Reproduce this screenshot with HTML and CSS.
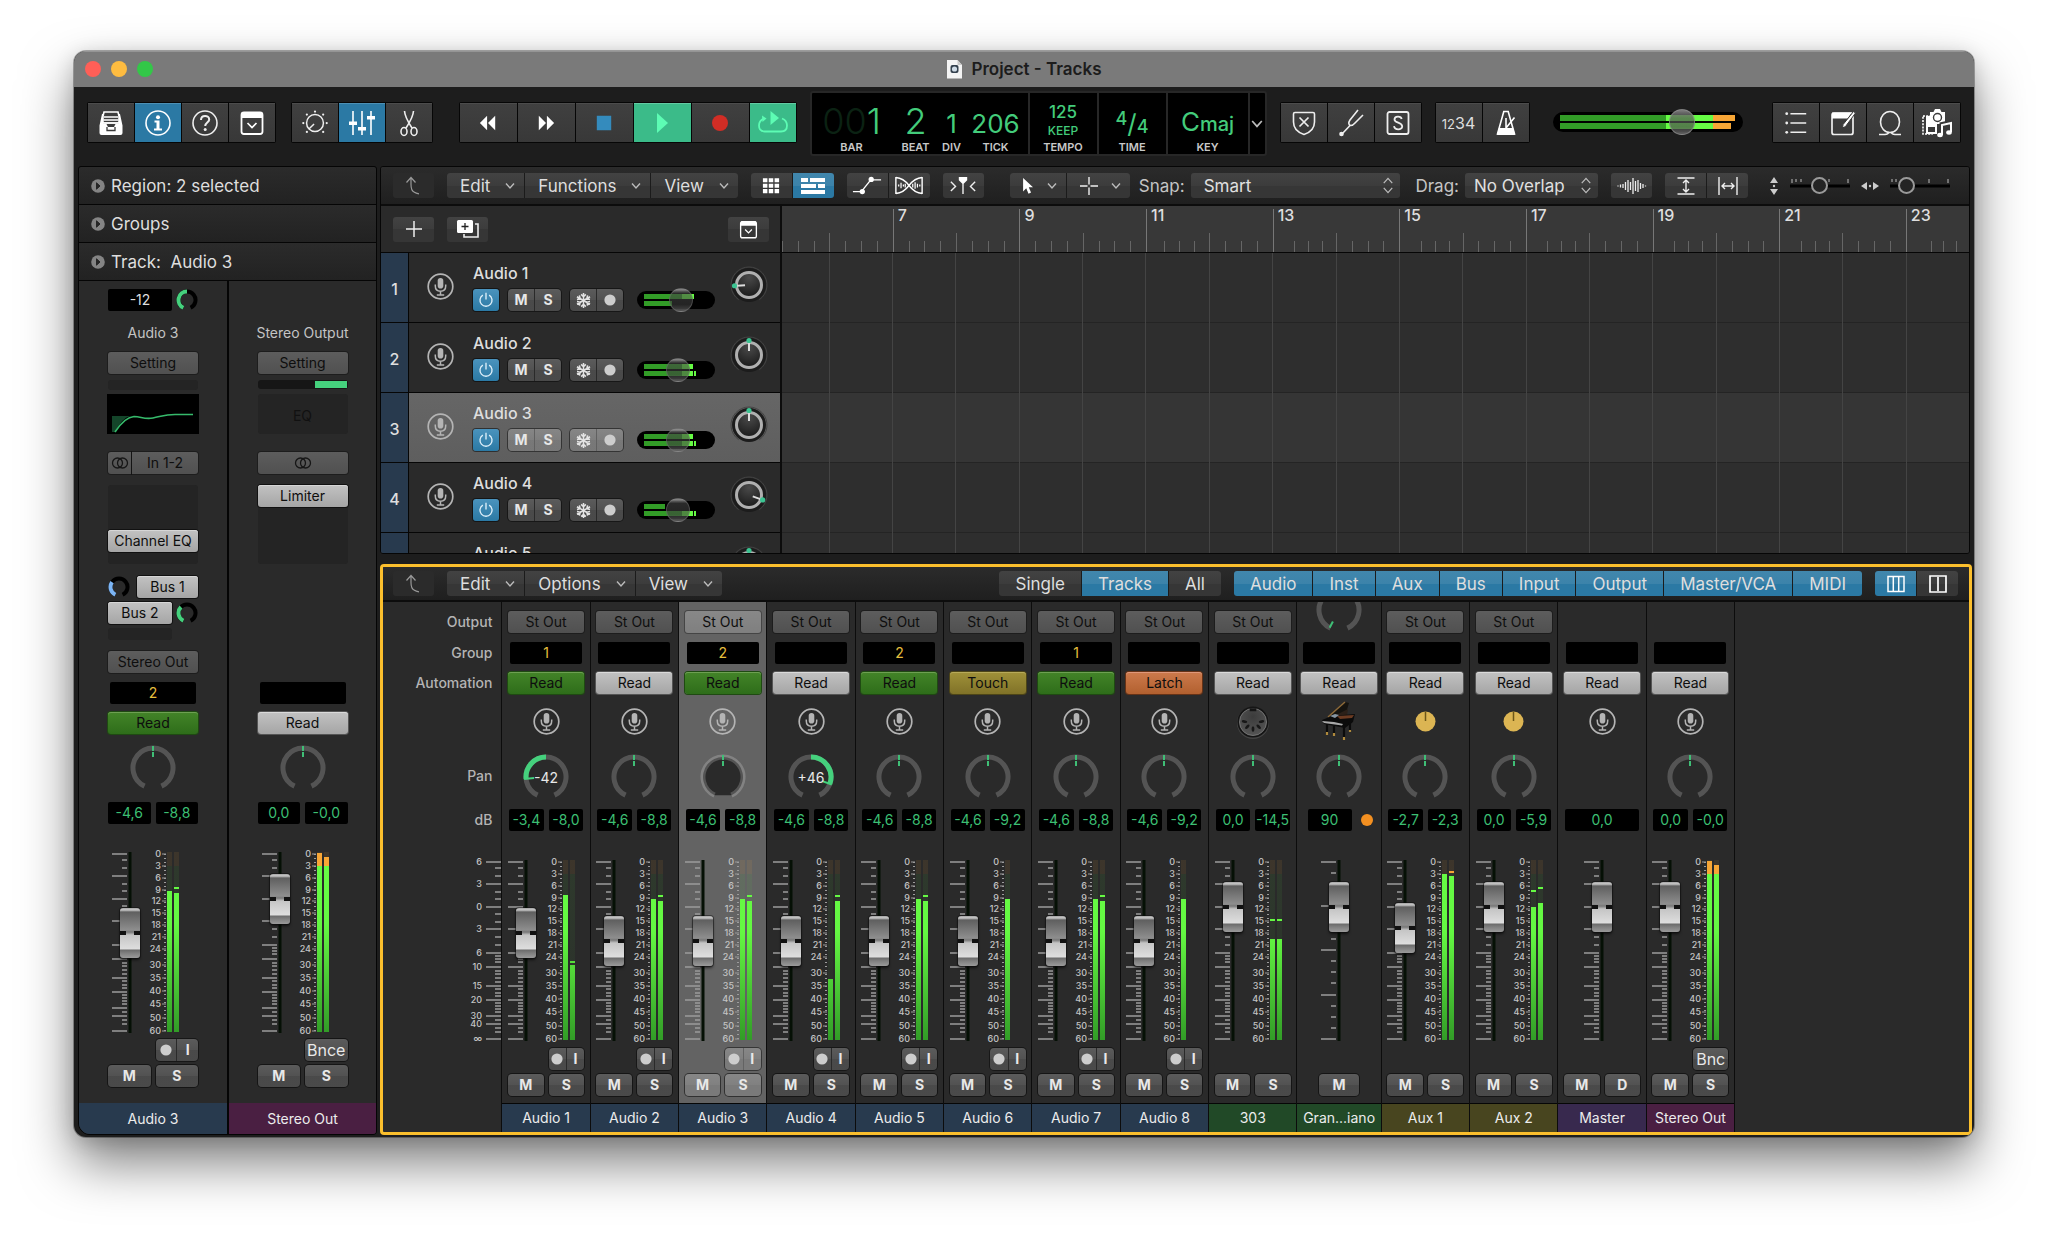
FILE: index.html
```html
<!DOCTYPE html>
<html lang="en">
<head>
<meta charset="utf-8">
<title>Project - Tracks</title>
<link rel="stylesheet" href="styles.css">
</head>
<body>
<svg class="sprite" aria-hidden="true">
  <defs>
    <linearGradient id="meter-lit" gradientUnits="userSpaceOnUse" x1="0" y1="0" x2="0" y2="180">
      <stop offset="0" stop-color="#f7a636"/><stop offset=".078" stop-color="#f7a636"/>
      <stop offset=".078" stop-color="#66fb44"/><stop offset=".4" stop-color="#64f842"/>
      <stop offset=".7" stop-color="#4bc935"/><stop offset="1" stop-color="#329c27"/>
    </linearGradient>
    <linearGradient id="meter-dim" gradientUnits="userSpaceOnUse" x1="0" y1="0" x2="0" y2="180">
      <stop offset="0" stop-color="#f7a636" stop-opacity=".09"/><stop offset=".078" stop-color="#f7a636" stop-opacity=".09"/>
      <stop offset=".078" stop-color="#50c040" stop-opacity=".1"/><stop offset=".4" stop-color="#50c040" stop-opacity=".08"/>
      <stop offset="1" stop-color="#50c040" stop-opacity=".02"/>
    </linearGradient>
    <radialGradient id="knob-face" cx=".5" cy=".2" r=".9"><stop offset="0" stop-color="#4a4a4a"/><stop offset="1" stop-color="#141414"/></radialGradient>
    <radialGradient id="din-face" cx=".5" cy=".3" r=".8"><stop offset="0" stop-color="#3c3c3c"/><stop offset="1" stop-color="#585858"/></radialGradient>
  </defs>
  <symbol id="i-library" viewBox="0 0 28 28"><path d="M7 3h14l1 4v7H6V7z" fill="none" stroke="#fff" stroke-width="1.6"/><path d="M7 8h14M6.5 11h15M6 14h16" stroke="#fff" stroke-width="1.4"/><path d="M2.5 16.5 5 5h1v10h3.500l1.500 3h6l1.500-3H22V5h1l2.500 11.500v7.500q0 2-2 2h-19q-2 0-2-2z" fill="#fff"/><path d="M10 18v3.500h8V18" fill="none" stroke="#3a3a3a" stroke-width="1.3"/></symbol>
  <symbol id="i-info" viewBox="0 0 28 28"><circle cx="14" cy="14" r="12" fill="none" stroke="#fff" stroke-width="1.6"/><circle cx="14" cy="8.2" r="2" fill="#fff"/><path d="M10.500 11.500h5v8h2.500v2h-8v-2h2.500v-6h-2z" fill="#fff"/></symbol>
  <symbol id="i-help" viewBox="0 0 28 28"><circle cx="14" cy="14" r="12" fill="none" stroke="#eee" stroke-width="1.6"/><path d="M10 11c0-5.500 8.200-5.200 8.200-.5 0 3-4 3.200-4 6.500" fill="none" stroke="#eee" stroke-width="2"/><circle cx="14.2" cy="20.5" r="1.5" fill="#eee"/></symbol>
  <symbol id="i-panel" viewBox="0 0 28 28"><rect x="3.5" y="3.5" width="21" height="21.5" rx="2.5" fill="none" stroke="#fff" stroke-width="1.8"/><path d="M4 3h20v6H4z" fill="#fff"/><path d="m9.500 14 4.500 4.500 4.500-4.500" fill="none" stroke="#fff" stroke-width="1.7"/></symbol>
  <symbol id="i-dial" viewBox="0 0 32 28"><circle cx="16" cy="14" r="9" fill="none" stroke="#eee" stroke-width="1.6"/><path d="m15 15-5.500 5.500" stroke="#eee" stroke-width="1.6"/><g fill="#eee"><circle cx="16" cy="1.8" r="1.2"/><circle cx="7.3" cy="5" r="1.2"/><circle cx="24.7" cy="5" r="1.2"/><circle cx="3.5" cy="14" r="1.2"/><circle cx="28.5" cy="14" r="1.2"/><circle cx="7.3" cy="23.5" r="1.2"/><circle cx="24.7" cy="23.5" r="1.2"/></g></symbol>
  <symbol id="i-faders" viewBox="0 0 28 28"><path d="M5 2v24M14 2v24M23 2v24" stroke="#fff" stroke-width="1.6"/><path d="M1 12.500h8v3.500H1zM10 18h8v3.500h-8zM19 7h8v3.500h-8z" fill="#fff"/></symbol>
  <symbol id="i-scissors" viewBox="0 0 28 28"><g fill="none" stroke="#eee" stroke-width="1.6"><path d="M9.500 2q.3 6 7.500 17M18.500 2q-.3 6-7.500 17"/><ellipse cx="9" cy="22.5" rx="3" ry="4"/><ellipse cx="19" cy="22.5" rx="3" ry="4"/></g></symbol>
  <symbol id="i-rewind" viewBox="0 0 24 20"><path d="M11 2v16L3 10zM20 2v16L12 10z" fill="#fff"/></symbol>
  <symbol id="i-forward" viewBox="0 0 24 20"><path d="M4 2v16l8-8zM13 2v16l8-8z" fill="#fff"/></symbol>
  <symbol id="i-stop" viewBox="0 0 20 20"><path d="M2 2h16v16H2z" fill="#348bbd"/></symbol>
  <symbol id="i-play" viewBox="0 0 20 24"><path d="M5 2v20l11-10z" fill="#5dfcb4"/></symbol>
  <symbol id="i-record" viewBox="0 0 20 20"><circle cx="10" cy="10" r="8" fill="#d12d25"/></symbol>
  <symbol id="i-cycle" viewBox="0 0 32 26"><path d="M7 8.500q-5 2-5 7 0 6 6 6h16q6 0 6-6 0-5-5-7" fill="none" stroke="#5dfcb4" stroke-width="1.8"/><path d="M5 5.500 9.500 8.500 5.500 12z" fill="#5dfcb4"/><path d="M13.500 1v14l8.500-7z" fill="#5dfcb4"/></symbol>
  <symbol id="i-shield" viewBox="0 0 28 28"><path d="M3.500 5q0-1.500 1.500-1.500h18q1.500 0 1.500 1.500v8q0 9-10.500 12.500Q3.500 22 3.500 13z" fill="none" stroke="#eee" stroke-width="1.6"/><path d="m9.500 8.500 9 9m0-9-9 9" stroke="#eee" stroke-width="1.7"/></symbol>
  <symbol id="i-fork" viewBox="0 0 28 28"><path d="m21 1-8 10q-2.500 4 .3 5.500 2 .5 4.700-2.500l8-8M13 16.500 5 25" fill="none" stroke="#eee" stroke-width="1.6"/><circle cx="4.5" cy="25" r="2.3" fill="#eee"/></symbol>
  <symbol id="i-solo" viewBox="0 0 28 28"><rect x="3.5" y="3" width="21" height="22" rx="2" fill="none" stroke="#eee" stroke-width="1.8"/><path d="M17.700 10c-.8-3.400-7.200-3-7.200.4 0 4 7.700 2.600 7.700 7 0 3.900-7.500 4-8.200-.2" fill="none" stroke="#eee" stroke-width="1.8"/></symbol>
  <symbol id="i-metronome" viewBox="0 0 28 28"><path d="M11.800 2.500h4.400L22.500 25h-17z" fill="none" stroke="#fff" stroke-width="1.6"/><path d="M6.800 19h14.400l1.800 7H5z" fill="#fff"/><path d="M14 20V9M14 19 22.500 8.500" stroke="#fff" stroke-width="1.6"/></symbol>
  <symbol id="i-list" viewBox="0 0 28 28"><path d="M8 4h17M8 14h17M8 24h17" stroke="#eee" stroke-width="1.6"/><g fill="#eee"><circle cx="4" cy="4" r="1.5"/><circle cx="4" cy="14" r="1.5"/><circle cx="4" cy="24" r="1.5"/></g></symbol>
  <symbol id="i-note" viewBox="0 0 28 28"><rect x="3" y="4" width="21" height="21.5" rx="2" fill="none" stroke="#eee" stroke-width="1.7"/><path d="M3 3.500h20l-4.500 6H3z" fill="#fff"/><path d="m24.500 2.500 2 1.500-10 13.500-3 1.500.6-3.500z" fill="#fff" stroke="#3a3a3a"/></symbol>
  <symbol id="i-loop" viewBox="0 0 28 28"><ellipse cx="14" cy="13" rx="9.500" ry="10.500" fill="none" stroke="#eee" stroke-width="1.6"/><path d="M3 25.500h6q3 0 4-2.500M25 25.500h-6q-3 0-4-2.500" fill="none" stroke="#eee" stroke-width="1.6"/></symbol>
  <symbol id="i-media" viewBox="0 0 32 30"><path d="M2 8h9v18H2z" fill="none" stroke="#fff" stroke-width="1.6" stroke-dasharray="2 1.2"/><path d="M5 8h11v18H5z" fill="#fff"/><path d="M7 19h7v5H7z" fill="#3a3a3a"/><path d="M9 4h3.500l1.500-3h5l1.500 3H24v12H9z" fill="#fff"/><circle cx="16.5" cy="9.5" r="4" fill="#fff" stroke="#3a3a3a" stroke-width="1.4"/><path d="M21 27V16.500l9-2V25" fill="none" stroke="#3a3a3a" stroke-width="5"/><path d="M21 27V17l9-2v9" fill="none" stroke="#fff" stroke-width="2"/><ellipse cx="19" cy="27" rx="2.8" ry="2.2" fill="#fff"/><ellipse cx="28" cy="24.5" rx="2.8" ry="2.2" fill="#fff"/></symbol>
  <symbol id="i-up" viewBox="0 0 20 20"><path d="M7 1.500v7q0 6 3 7.500 2 1.500 5 1.800M2.500 6.500 7 1.500l4.500 5" fill="none" stroke="#999" stroke-width="1.2"/></symbol>
  <symbol id="i-chev" viewBox="0 0 10 8"><path d="m1 1.500 4 4.500 4-4.500" fill="none" stroke="#bbb" stroke-width="1.4"/></symbol>
  <symbol id="i-updown" viewBox="0 0 12 18"><path d="m1.500 6.500 4.500-5 4.500 5M1.500 11.500l4.500 5 4.500-5" fill="none" stroke="#bbb" stroke-width="1.3"/></symbol>
  <symbol id="i-grid" viewBox="0 0 20 18"><path d="M1 1h5v4.500H1zM7.500 1h5v4.500h-5zM14 1h5v4.500h-5zM1 7h5v4.500H1zM7.500 7h5v4.500h-5zM14 7h5v4.500h-5zM1 13h5v4.500H1zM7.500 13h5v4.500h-5zM14 13h5v4.500h-5z" fill="#fff"/></symbol>
  <symbol id="i-regions" viewBox="0 0 26 18"><path d="M1 1h7v4H1zM10 1h15v4H10zM1 7h15v4H1zM18 7h7v4h-7zM1 13h24v4H1z" fill="#fff"/></symbol>
  <symbol id="i-automation" viewBox="0 0 32 20"><path d="M1 16.500h9L20 4h11" fill="none" stroke="#fff" stroke-width="1.5"/><circle cx="11" cy="16.5" r="2.8" fill="#fff"/><circle cx="20.5" cy="3.5" r="2.8" fill="#fff"/></symbol>
  <symbol id="i-flex" viewBox="0 0 32 20"><path d="M2 1v18M30 1v18M2 1.500q8 .5 14 8.500t14 8.500M2 18.500q8-.5 14-8.500t14-8.500" fill="none" stroke="#fff" stroke-width="1.5"/><path d="M5 9v2M7.500 7v6M10 9v2M12 8v4M20 8v4M22.500 6.500v7M25 8v4M27.500 9v2" stroke="#fff" stroke-width="1.3"/></symbol>
  <symbol id="i-catch" viewBox="0 0 30 20"><path d="M10.500 1h9v3.500L15.700 8V19h-1.400V8l-3.800-3.500z" fill="#fff"/><path d="m2 6 5 5-5 5M28 6l-5 5 5 5" fill="none" stroke="#eee" stroke-width="1.5"/></symbol>
  <symbol id="i-pointer" viewBox="0 0 14 20"><path d="M1 1v15l3.500-3.500L7 18.500l2.800-1.200L7.300 11.500H12z" fill="#fff"/></symbol>
  <symbol id="i-cross" viewBox="0 0 20 20"><path d="M10 1v7.500M10 11.500V19M1 10h7.500M11.500 10H19" stroke="#eee" stroke-width="1.4"/></symbol>
  <symbol id="i-wave" viewBox="0 0 30 18"><path d="M1 8.500v1M3.500 7.500v3M6 7v4M8.500 5v8M11 3v12M13.500 5v8M16 1v16M18.500 4v10M21 3v12M23.500 6v6M26 7v4M28.500 8.500v1" stroke="#eee" stroke-width="1.3"/></symbol>
  <symbol id="i-vzoom" viewBox="0 0 20 18"><path d="M1.500 1h17M1.500 17h17M10 3.500v11M7 6l3-3 3 3M7 12l3 3 3-3" fill="none" stroke="#eee" stroke-width="1.4"/></symbol>
  <symbol id="i-hzoom" viewBox="0 0 20 18"><path d="M1 0v18M19 0v18M4 9h12M7 6 4 9l3 3M13 6l3 3-3 3" fill="none" stroke="#eee" stroke-width="1.4"/></symbol>
  <symbol id="i-varrows" viewBox="0 0 10 18"><path d="M5 0l4 6H1zM5 18l4-6H1z" fill="#ccc"/><circle cx="5" cy="9" r="1.2" fill="#ccc"/></symbol>
  <symbol id="i-harrows" viewBox="0 0 18 10"><path d="M0 5l6-4v8zM18 5l-6-4v8z" fill="#ccc"/><circle cx="9" cy="5" r="1.2" fill="#ccc"/></symbol>
  <symbol id="i-plus" viewBox="0 0 18 18"><path d="M9 1v16M1 9h16" stroke="#eee" stroke-width="1.5"/></symbol>
  <symbol id="i-dup" viewBox="0 0 24 20"><path d="M19 5h3v13H8v-3" fill="none" stroke="#eee" stroke-width="1.6"/><rect x="1" y="1" width="16" height="13" rx="1.5" fill="#fff"/><path d="M9 4v7M5.500 7.500h7" stroke="#222" stroke-width="1.3"/></symbol>
  <symbol id="i-cols3" viewBox="0 0 20 20"><path d="M2 2.500h16v15H2zM7.300 3v14M12.700 3v14" fill="none" stroke="#fff" stroke-width="1.5"/></symbol>
  <symbol id="i-cols2" viewBox="0 0 20 20"><path d="M2 2h16v16H2zM10 3v14" fill="none" stroke="#fff" stroke-width="1.7"/></symbol>
  <symbol id="i-disclose" viewBox="0 0 14 14"><circle cx="7" cy="7" r="6.8" fill="#848484"/><path d="m5.500 3.800 3.500 3.200-3.500 3.200z" fill="#262626" stroke="#262626"/></symbol>
  <symbol id="i-mic" viewBox="0 0 27 27"><circle cx="13.5" cy="13.5" r="12.3" fill="none" stroke="#b4b4b4" stroke-width="1.7"/><rect x="10.7" y="5" width="5.6" height="10.5" rx="2.8" fill="#b4b4b4"/><path d="M8.300 11.500v1.500q0 5.200 5.200 5.200t5.200-5.200v-1.500M13.500 18v3.500M9.800 22h7.400" fill="none" stroke="#b4b4b4" stroke-width="1.5"/></symbol>
  <symbol id="i-power" viewBox="0 0 20 20"><path d="M6.500 4.500a6.700 6.700 0 1 0 7 0M10 2v7.500" fill="none" stroke="#dff0fa" stroke-width="1.5"/></symbol>
  <symbol id="i-freeze" viewBox="0 0 18 18"><g stroke="#e4e4e4" stroke-width="1.6" fill="none"><path id="arm" d="M9 1v16M6.500 2.500 9 5l2.500-2.500M6.500 15.500 9 13l2.500 2.500"/><use href="#arm" transform="rotate(60 9 9)"/><use href="#arm" transform="rotate(120 9 9)"/></g></symbol>
  <symbol id="i-dot" viewBox="0 0 12 12"><circle cx="6" cy="6" r="5.6" fill="#cdcdcd"/></symbol>
  <symbol id="i-rings" viewBox="0 0 18 14"><circle cx="6.5" cy="7" r="5" fill="none" stroke="#161616" stroke-width="1.3"/><circle cx="11.5" cy="7" r="5" fill="none" stroke="#161616" stroke-width="1.3"/></symbol>
  <symbol id="i-aux" viewBox="0 0 27 27"><circle cx="13.5" cy="13.5" r="10" fill="#dcb553"/><path d="M13.500 3.500V13" stroke="#6d5718" stroke-width="1.5"/></symbol>
  <symbol id="i-din" viewBox="0 0 36 36"><circle cx="18" cy="19" r="17" fill="#444"/><circle cx="18" cy="18" r="16.5" fill="#151515"/><circle cx="18" cy="18" r="14.3" fill="url(#din-face)" stroke="#777"/><path d="M14.500 3.500h7v3h-7z" fill="#151515"/><g fill="#181818"><ellipse cx="9" cy="17.5" rx="3" ry="1.5" transform="rotate(10 9 17.500)"/><ellipse cx="12" cy="23" rx="3" ry="1.5" transform="rotate(-45 12 23)"/><ellipse cx="18" cy="25.5" rx="1.5" ry="3"/><ellipse cx="24" cy="23" rx="3" ry="1.5" transform="rotate(45 24 23)"/><ellipse cx="27" cy="17.5" rx="3" ry="1.5" transform="rotate(-10 27 17.500)"/></g></symbol>
  <symbol id="i-piano" viewBox="0 0 36 40"><path d="M7 16 24 1l4 1-3 10 2 3z" fill="#15130f"/><path d="M7 16 24 1" stroke="#8d6a38" stroke-width="1.5"/><path d="m11 16 16-8-1 7z" fill="#2b2018"/><path d="m1 19 10-4 23-2-2 8-8 6-21-4z" fill="#0b0b0b"/><path d="m16 15 17-1-2 3-12 1z" fill="#6b3b22"/><path d="m9 15 5-2 4 1-4 3z" fill="#8796a3"/><path d="m1 20 12 1 9 2-1 1.500L3 22z" fill="#a8a8a8"/><path d="M6 23v10M13 25v9M23 26v12M29 21v9" stroke="#0b0b0b" stroke-width="2.2"/><path d="M6 31v3M13 32v3M23 36v3M29 29v2" stroke="#b08a3c" stroke-width="2.2"/></symbol>
</svg>

<div class="window">
  <header class="titlebar">
    <div class="lights"><button class="light light--close" aria-label="Close"></button><button class="light light--min" aria-label="Minimise"></button><button class="light light--max" aria-label="Zoom"></button></div>
    <h1 class="title"><svg width="17" height="20" viewBox="0 0 17 20"><path d="M1 1h10.500L16 6v13.500H1z" fill="#f4f4f4"/><path d="M11.500 1v5H16z" fill="#c9c9c9"/><rect x="4.5" y="6" width="8" height="8" rx="2" fill="#33404d"/><circle cx="8.5" cy="10" r="2.6" fill="#cfdbe6"/></svg>Project - Tracks</h1>
    <span></span>
  </header>

  <div class="control-bar">
    <div class="cluster">
      <div class="tools">
        <button class="tool" aria-label="Library"><svg width="28" height="28"><use href="#i-library"/></svg></button>
        <button class="tool tool--on" aria-label="Inspector"><svg width="28" height="28"><use href="#i-info"/></svg></button>
        <button class="tool" aria-label="Quick Help"><svg width="28" height="28"><use href="#i-help"/></svg></button>
        <button class="tool" aria-label="Toolbar"><svg width="28" height="28"><use href="#i-panel"/></svg></button>
      </div>
      <div class="tools">
        <button class="tool" aria-label="Smart Controls"><svg width="30" height="28"><use href="#i-dial"/></svg></button>
        <button class="tool tool--on" aria-label="Mixer"><svg width="28" height="28"><use href="#i-faders"/></svg></button>
        <button class="tool" aria-label="Editors"><svg width="28" height="28"><use href="#i-scissors"/></svg></button>
      </div>
    </div>
    <div class="cluster cluster--mid">
      <div class="tools">
        <button class="tool tool--wide" aria-label="Rewind"><svg width="22" height="18"><use href="#i-rewind"/></svg></button>
        <button class="tool tool--wide" aria-label="Forward"><svg width="22" height="18"><use href="#i-forward"/></svg></button>
        <button class="tool tool--wide" aria-label="Stop"><svg width="18" height="18"><use href="#i-stop"/></svg></button>
        <button class="tool tool--wide tool--go" aria-label="Play"><svg width="20" height="24"><use href="#i-play"/></svg></button>
        <button class="tool tool--wide" aria-label="Record"><svg width="20" height="20"><use href="#i-record"/></svg></button>
        <button class="tool tool--go" aria-label="Cycle"><svg width="32" height="26"><use href="#i-cycle"/></svg></button>
      </div>
      <div class="lcd">
        <div class="lcd__pane lcd__pane--pos">
          <div class="lcd__cell lcd__cell--bar"><span class="lcd__big"><i>00</i>1</span><span class="lcd__label">BAR</span></div>
          <div class="lcd__cell lcd__cell--beat"><span class="lcd__big">2</span><span class="lcd__label">BEAT</span></div>
          <div class="lcd__cell lcd__cell--div"><span class="lcd__mid">1</span><span class="lcd__label">DIV</span></div>
          <div class="lcd__cell lcd__cell--tick"><span class="lcd__mid">206</span><span class="lcd__label">TICK</span></div>
        </div>
        <div class="lcd__pane lcd__pane--tempo"><span class="lcd__tempo">125</span><span class="lcd__keep">KEEP</span><span class="lcd__label">TEMPO</span></div>
        <div class="lcd__pane lcd__pane--tempo"><span class="lcd__sig"><sup>4</sup>/<sub>4</sub></span><span class="lcd__label">TIME</span></div>
        <div class="lcd__pane lcd__pane--key"><span class="lcd__mid">C<small>maj</small></span><span class="lcd__label">KEY</span></div>
        <button class="lcd__more" aria-label="Display mode"><svg width="12" height="10"><use href="#i-chev"/></svg></button>
      </div>
      <div class="tools">
        <button class="tool" aria-label="Replace"><svg width="28" height="28"><use href="#i-shield"/></svg></button>
        <button class="tool" aria-label="Tuner"><svg width="28" height="28"><use href="#i-fork"/></svg></button>
        <button class="tool" aria-label="Solo"><svg width="28" height="28"><use href="#i-solo"/></svg></button>
      </div>
      <div class="tools">
        <button class="tool tool--count"><small>12</small>34</button>
        <button class="tool" aria-label="Metronome"><svg width="28" height="28"><use href="#i-metronome"/></svg></button>
      </div>
      <div class="master">
        <svg class="master__bars" width="190" height="20"><path d="M7 3h106v6H7zM7 11h106v6H7z" fill="#329c27"/><path d="M113 3h47v6h-47zM113 11h47v6h-47z" fill="#66fb44"/><path d="M160 3h22v6h-22zM160 11h18v6h-18z" fill="#f7a636"/></svg>
        <input class="master__range" type="range" aria-label="Master volume" min="0" max="100" value="71">
      </div>
    </div>
    <div class="tools">
      <button class="tool" aria-label="List Editors"><svg width="26" height="28"><use href="#i-list"/></svg></button>
      <button class="tool" aria-label="Note Pads"><svg width="28" height="28"><use href="#i-note"/></svg></button>
      <button class="tool" aria-label="Loop Browser"><svg width="28" height="28"><use href="#i-loop"/></svg></button>
      <button class="tool" aria-label="Browsers"><svg width="32" height="30"><use href="#i-media"/></svg></button>
    </div>
  </div>

  <main class="workspace">
    <aside class="inspector">
      <button class="fold"><svg width="14" height="14"><use href="#i-disclose"/></svg>Region: 2 selected</button>
      <button class="fold"><svg width="14" height="14"><use href="#i-disclose"/></svg>Groups</button>
      <button class="fold"><svg width="14" height="14"><use href="#i-disclose"/></svg>Track: &nbsp;Audio 3</button>
      <div class="channels">
        <section class="channel" id="channel-track">
          <div class="gain"><output class="lcdbox lcdbox--gain">-12</output><svg class="mini-knob" data-from="-155" data-to="0" data-color="#45d17d"></svg></div>
          <div class="channel__title">Audio 3</div>
          <button class="plate">Setting</button>
          <div class="well well--reduction"></div>
          <svg class="eq" width="92" height="40" viewBox="0 0 92 40"><path d="M0 0h92v40H0z" fill="#000"/><path d="M5 22h18q-8 2-15 16H5z" fill="#14452a"/><path d="M8 38Q18 23 27 22.500c7 0 10 3 19 1.500 8-1.500 12-3.500 22-3.500h18" fill="none" stroke="#36ba6b" stroke-width="1.6"/></svg>
          <div class="input"><button class="plate plate--format" aria-label="Stereo"><svg width="18" height="14"><use href="#i-rings"/></svg></button><button class="plate plate--in">In 1-2</button></div>
          <div class="well well--slots"><button class="plate plate--light">Channel EQ</button></div>
          <div class="sends">
            <div class="send send--pre"><svg class="mini-knob" data-from="-155" data-to="-55" data-color="#7cb5f5"></svg><button class="plate plate--light">Bus 1</button></div>
            <div class="send"><button class="plate plate--light">Bus 2</button><svg class="mini-knob" data-from="-155" data-to="-45" data-color="#45d17d"></svg></div>
            <div class="well well--send"></div>
          </div>
          <button class="plate">Stereo Out</button>
        </section>
        <section class="channel" id="channel-out">
          <div class="gain"></div>
          <div class="channel__title">Stereo Output</div>
          <button class="plate">Setting</button>
          <div class="well well--gr"><span></span></div>
          <div class="well well--eq">EQ</div>
          <button class="plate" aria-label="Stereo"><svg width="18" height="14"><use href="#i-rings"/></svg></button>
          <div class="well well--slots well--top"><button class="plate plate--light">Limiter</button></div>
          <div class="sends"></div>
          <div></div>
        </section>
      </div>
    </aside>

    <div class="editors">
      <section class="arrange">
        <div class="bar">
          <button class="btn btn--up" aria-label="Back"><svg width="20" height="20"><use href="#i-up"/></svg></button>
          <div class="group"><button class="btn btn--menu">Edit<svg width="10" height="8"><use href="#i-chev"/></svg></button><button class="btn btn--menu">Functions<svg width="10" height="8"><use href="#i-chev"/></svg></button><button class="btn btn--menu">View<svg width="10" height="8"><use href="#i-chev"/></svg></button></div>
          <div class="group"><button class="btn btn--icon" aria-label="Cells"><svg width="18" height="17"><use href="#i-grid"/></svg></button><button class="btn btn--icon btn--on" aria-label="Tracks"><svg width="26" height="18"><use href="#i-regions"/></svg></button></div>
          <div class="group"><button class="btn btn--icon" aria-label="Automation"><svg width="30" height="19"><use href="#i-automation"/></svg></button><button class="btn btn--icon" aria-label="Flex"><svg width="30" height="19"><use href="#i-flex"/></svg></button></div>
          <button class="btn btn--icon" aria-label="Catch"><svg width="28" height="19"><use href="#i-catch"/></svg></button>
          <div class="group group--tools"><button class="btn btn--menu" aria-label="Pointer tool"><svg width="13" height="18"><use href="#i-pointer"/></svg><svg width="10" height="8"><use href="#i-chev"/></svg></button><button class="btn btn--menu" aria-label="Marquee tool"><svg width="20" height="20"><use href="#i-cross"/></svg><svg width="10" height="8"><use href="#i-chev"/></svg></button></div>
          <label class="field field--snap">Snap: <span class="picker"><select><option>Smart</option></select><svg width="12" height="17"><use href="#i-updown"/></svg></span></label>
          <label class="field">Drag: <span class="picker picker--drag"><select><option>No Overlap</option></select><svg width="12" height="17"><use href="#i-updown"/></svg></span></label>
          <button class="btn btn--icon" aria-label="Waveform zoom"><svg width="30" height="18"><use href="#i-wave"/></svg></button>
          <div class="group"><button class="btn btn--icon" aria-label="Vertical auto zoom"><svg width="20" height="18"><use href="#i-vzoom"/></svg></button><button class="btn btn--icon" aria-label="Fit horizontally"><svg width="20" height="18"><use href="#i-hzoom"/></svg></button></div>
          <div class="zooms">
            <svg width="10" height="18"><use href="#i-varrows"/></svg>
            <div class="zoom"><svg width="62" height="18"><path d="M1 9h60" stroke="#000" stroke-width="3"/><path d="M3 2v4M7 2v3M12 2v3M40 2v3M59 2v4" stroke="#bbb"/></svg><input type="range" aria-label="Vertical zoom" value="48"></div>
            <svg width="18" height="10"><use href="#i-harrows"/></svg>
            <div class="zoom"><svg width="62" height="18"><path d="M1 9h60" stroke="#000" stroke-width="3"/><path d="M3 2v3M7 2v3M40 2v4M59 2v4" stroke="#bbb"/></svg><input type="range" aria-label="Horizontal zoom" value="20"></div>
          </div>
        </div>
        <div class="tracks">
          <div class="headers">
            <div class="headers__top">
              <button class="btn btn--icon" aria-label="Add track"><svg width="18" height="18"><use href="#i-plus"/></svg></button>
              <button class="btn btn--icon" aria-label="Duplicate track"><svg width="24" height="20"><use href="#i-dup"/></svg></button>
              <button class="btn btn--icon btn--end" aria-label="Header options"><svg width="21" height="21"><use href="#i-panel"/></svg></button>
            </div>
            <div id="track-list"></div>
          </div>
          <div class="timeline">
            <div class="ruler" id="ruler"></div>
            <div class="lanes"><div class="lanes__rows"><i></i><i></i><i class="is-selected"></i><i></i><i></i></div><div class="lanes__grid" id="grid"></div></div>
          </div>
        </div>
      </section>

      <section class="mixer">
        <div class="bar">
          <button class="btn btn--up" aria-label="Back"><svg width="20" height="20"><use href="#i-up"/></svg></button>
          <div class="group"><button class="btn btn--menu">Edit<svg width="10" height="8"><use href="#i-chev"/></svg></button><button class="btn btn--menu">Options<svg width="10" height="8"><use href="#i-chev"/></svg></button><button class="btn btn--menu">View<svg width="10" height="8"><use href="#i-chev"/></svg></button></div>
          <div class="group group--right"><button class="btn">Single</button><button class="btn btn--on">Tracks</button><button class="btn">All</button></div>
          <div class="group"><button class="btn btn--on">Audio</button><button class="btn btn--on">Inst</button><button class="btn btn--on">Aux</button><button class="btn btn--on">Bus</button><button class="btn btn--on">Input</button><button class="btn btn--on">Output</button><button class="btn btn--on">Master/VCA</button><button class="btn btn--on">MIDI</button></div>
          <div class="group"><button class="btn btn--icon btn--on" aria-label="Narrow strips"><svg width="20" height="20"><use href="#i-cols3"/></svg></button><button class="btn btn--icon" aria-label="Wide strips"><svg width="20" height="20"><use href="#i-cols2"/></svg></button></div>
        </div>
        <div class="strips" id="strips">
          <div class="legend"><span>Output</span><span>Group</span><span>Automation</span><span></span><span class="legend__pan">Pan</span><span>dB</span><svg id="legend-scale" width="60" height="190"></svg></div>
        </div>
      </section>
    </div>
  </main>
</div>
<script src="mixer.js"></script>
</body>
</html>
```
FILE: styles.css
```css
* { box-sizing: border-box; }

body {
  margin: 0;
  height: 100vh;
  min-height: 900px;
  padding: 51px 74px 99px;
  background: #fff;
  font-family: Inter, "Liberation Sans", sans-serif;
  font-size: 14px;
  line-height: 20px;
  color: #dedede;
  display: flex;
}

button, input, select { font: inherit; color: inherit; margin: 0; padding: 0; border: 0; background: none; }
svg { display: block; flex: none; }
.sprite { position: absolute; width: 0; height: 0; }

.window {
  flex: 1;
  min-width: 0;
  display: flex;
  flex-direction: column;
  background: #1d1d1d;
  border-radius: 12px;
  overflow: hidden;
  box-shadow: 0 0 0 1px rgba(0, 0, 0, .3), 0 26px 52px rgba(0, 0, 0, .5), 0 4px 20px rgba(0, 0, 0, .16);
}

/* Title bar */
.titlebar {
  height: 36px;
  padding-bottom: 2px;
  display: grid;
  grid-template-columns: 1fr auto 1fr;
  align-items: center;
  background: #7a7a7a;
  border-top: 1px solid #959595;
}
.lights { display: flex; gap: 10px; padding-left: 11px; }
.light { width: 16px; height: 16px; border-radius: 50%; }
.light--close { background: #ff5f57; }
.light--min { background: #febc40; }
.light--max { background: #33c748; }
.title { margin: 0; display: flex; align-items: center; gap: 8px; font-size: 17px; line-height: 20px; font-weight: 600; color: #1c1c1c; }

/* Control bar */
.control-bar {
  height: 79px;
  flex: none;
  display: flex;
  justify-content: space-between;
  padding: 4px 13px 0;
  background: #1d1d1d;
}
.cluster { display: flex; gap: 15px; }
.cluster--mid { gap: 13px; margin-right: 4px; }
.tools {
  display: flex;
  gap: 1px;
  height: 41px;
  margin-top: 11px;
  padding: 1px;
  background: #060606;
  border-radius: 2px;
}
.tool {
  width: 46px;
  display: flex;
  align-items: center;
  justify-content: center;
  background: linear-gradient(#404040, #383838);
  box-shadow: inset 0 1px #4c4c4c;
}
.tool--wide { width: 57px; }
.tool--on { background: #2b79a4; box-shadow: inset 0 1px #4c90b5; }
.tool--go { background: #3bbb89; box-shadow: inset 0 1px #63cba4; }
.tool--count { font-size: 16px; align-items: baseline; line-height: 41px; }
.tool--count small { font-size: 13px; }

.lcd { display: flex; height: 65px; background: #000; border: 2px solid #272727; border-radius: 3px; color: #43cc7b; }
.lcd__pane { display: flex; flex-direction: column; align-items: center; justify-content: flex-end; border-right: 2px solid #272727; }
.lcd__pane--pos { flex-direction: row; align-items: flex-end; width: 218px; }
.lcd__pane--tempo { width: 69px; }
.lcd__pane--key { width: 82px; }
.lcd__cell { display: flex; flex-direction: column; align-items: center; }
.lcd__cell--bar { width: 80px; }
.lcd__cell--beat { width: 48px; }
.lcd__cell--div { width: 24px; }
.lcd__cell--tick { width: 64px; }
.lcd__big { font-size: 36px; line-height: 38px; font-weight: 300; }
.lcd__big i { font-style: normal; color: #0b2213; }
.lcd__mid { font-size: 26px; line-height: 32px; font-weight: 400; }
.lcd__mid small { font-size: 20px; font-weight: 500; }
.lcd__tempo { font-size: 17px; line-height: 20px; font-weight: 500; }
.lcd__keep { font-size: 12px; line-height: 18px; font-weight: 500; }
.lcd__sig { font-size: 26px; line-height: 32px; }
.lcd__sig sup, .lcd__sig sub { font-size: 18px; font-weight: 500; line-height: 0; vertical-align: baseline; }
.lcd__sig sup { vertical-align: 8px; }
.lcd__label { font-size: 11px; line-height: 14px; font-weight: 600; color: #c8c8c8; }
.lcd__more { width: 15px; display: flex; align-items: center; justify-content: center; }

.master { display: grid; align-items: center; width: 190px; height: 26px; margin: 18px 0 0 10px; }
.master > * { grid-area: 1 / 1; }
.master__bars { background: #000; border-radius: 10px; }
.master__range, .pill input { appearance: none; width: 100%; height: 26px; }
.master__range::-webkit-slider-thumb,
.pill input::-webkit-slider-thumb {
  appearance: none;
  width: 26px;
  height: 26px;
  border-radius: 50%;
  border: 1px solid rgba(150, 150, 150, .6);
  background: linear-gradient(rgba(130, 130, 130, .95), rgba(85, 85, 85, .7) 35%, rgba(75, 75, 75, .7) 70%, rgba(110, 110, 110, .8));
}

/* Workspace */
.workspace { flex: 1; min-height: 0; display: grid; grid-template-columns: 299px 1fr; grid-template-rows: minmax(0, 1fr); gap: 3px; padding: 0 2px 2px 4px; }
.inspector { display: flex; flex-direction: column; background: #050505; border: 1px solid #050505; border-radius: 3px 3px 4px 12px; overflow: hidden; }
.fold {
  height: 37px;
  flex: none;
  margin-bottom: 1px;
  padding-left: 12px;
  display: flex;
  align-items: center;
  gap: 6px;
  font-size: 17px;
  background: linear-gradient(#2b2b2b, #222);
}
.channels { flex: 1; min-height: 0; display: grid; grid-template-columns: 148px 1fr; gap: 2px; }
.channel {
  display: grid;
  grid-template-columns: 90px;
  grid-template-rows: 34px 29px 28px 14px 58px 33px 91px 75px 31px 30px 33px 57px 50px 187px 26px 1fr 31px;
  justify-content: center;
  align-items: start;
  justify-items: center;
  padding-top: 8px;
  background: #2a2a2a;
}
.gain { display: flex; gap: 4px; align-items: center; justify-self: start; }
.channel__title { white-space: nowrap; color: #c4c4c4; }
.mini-knob { width: 22px; height: 22px; }

.lcdbox {
  display: block;
  height: 22px;
  line-height: 22px;
  border-radius: 2px;
  background: #000;
  text-align: center;
  color: #3cbf73;
}
.lcdbox--gain { width: 64px; color: #dedede; }
.lcdbox--group { width: calc(100% - 4px); color: #e6bf3d; }

.plate {
  width: 100%;
  height: 22px;
  line-height: 20px;
  border-radius: 3px;
  display: flex;
  align-items: center;
  justify-content: center;
  white-space: nowrap;
  color: #0e0e0e;
  background: linear-gradient(rgba(255, 255, 255, .24), rgba(255, 255, 255, .18));
  box-shadow: 0 0 0 1px rgba(0, 0, 0, .3);
}
.plate--light { background: linear-gradient(#c2c2c2, #a5a5a5); box-shadow: inset 0 1px #d6d6d6, 0 0 0 1px #111; }
.plate--read { background: linear-gradient(#438428, #2e6d1a); box-shadow: inset 0 1px #6da052, 0 0 0 1px #1f4a12; }
.plate--off { background: linear-gradient(#c2c2c2, #a5a5a5); box-shadow: inset 0 1px #dadada, 0 0 0 1px #555; }
.plate--touch { background: linear-gradient(#a09139, #807228); box-shadow: inset 0 1px #b8aa59, 0 0 0 1px #4d4517; }
.plate--latch { background: linear-gradient(#cc7a4c, #b2602f); box-shadow: inset 0 1px #e0987a, 0 0 0 1px #663216; }

.input { display: grid; grid-template-columns: 23px 1fr; gap: 1px; width: 100%; }
.plate--format { border-radius: 3px 0 0 3px; }
.plate--in { border-radius: 0 3px 3px 0; }
.well { width: 100%; border-radius: 3px; background: #242424; }
.well--reduction { height: 10px; }
.well--gr { height: 9px; background: #161616; padding: 1px; }
.well--gr span { display: block; width: 32px; height: 7px; margin-left: auto; background: #45d17d; }
.well--eq { height: 40px; line-height: 44px; text-align: center; color: #111; }
.well--slots { height: 79px; padding-top: 45px; }
.well--top { padding-top: 0; }
.well--send { width: 64px; height: 12px; }
.sends { display: flex; flex-direction: column; gap: 4px; width: 100%; }
.send { display: flex; gap: 4px; }
.send .plate { width: 64px; }
.send--pre { justify-content: flex-end; gap: 7px; }

.duo { display: grid; grid-template-columns: 1fr 1fr; gap: 5px; width: 100%; }
.strip .duo--db { width: calc(100% - 2px); }
.half { display: grid; grid-template-columns: 1fr 1fr; gap: 1px; grid-column: 2; border-radius: 4px; overflow: hidden; box-shadow: 0 0 0 1px rgba(0, 0, 0, .45); }
.key {
  height: 22px;
  line-height: 22px;
  font-weight: 700;
  color: #e8e8e8;
  display: flex;
  align-items: center;
  justify-content: center;
  background: linear-gradient(rgba(255, 255, 255, .23), rgba(255, 255, 255, .19) 50%, rgba(255, 255, 255, .15) 50%, rgba(255, 255, 255, .15));
}
.duo > .key, .key--alone { border-radius: 4px; box-shadow: 0 0 0 1px rgba(0, 0, 0, .5); }
.key--alone { width: 40px; }
.duo > .key--bounce { grid-column: 2; font-weight: 400; font-size: 16px; }
.fader { display: grid; justify-self: start; }
.fader > * { grid-area: 1 / 1; }
.fader svg, .legend svg { overflow: visible; }
.channel .fader { margin-left: 4px; }
.fader--solo { justify-self: center; }
.fader input {
  appearance: none;
  writing-mode: vertical-lr;
  direction: rtl;
  width: 22px;
  height: 181px;
  margin-left: 7px;
}
.fader input::-webkit-slider-thumb {
  appearance: none;
  width: 20px;
  height: 50px;
  border-radius: 3px;
  background:
    linear-gradient(#111, #111) 0 23px / 6px 4px no-repeat,
    linear-gradient(#111, #111) 100% 23px / 6px 4px no-repeat,
    linear-gradient(#a4a4a4, #c9c9c9 2px, #5f5f5f 4px, #8e8e8e 22px, #777 24px, #c5c5c5 27px, #dedede 41px, #6b6b6b 42px, #858585 46px, #9a9a9a 50px);
  box-shadow: 0 0 0 1px rgba(10, 10, 10, .45), 0 2px 3px rgba(0, 0, 0, .6);
}
.digits { font-size: 9px; font-weight: 500; fill: #c4c4c4; text-anchor: end; }
.name { align-self: stretch; justify-self: stretch; text-align: center; white-space: nowrap; color: #ececec; }
.channel .name { line-height: 31px; margin: 0 -29px; }
.name--audio { background: #283a4e; }
.name--inst { background: #214927; }
.name--aux { background: #48451f; }
.name--master { background: #38294e; }
.name--out { background: #4a1f42; }

/* Editors */
.editors { display: flex; flex-direction: column; gap: 10px; min-width: 0; min-height: 0; }
.bar {
  height: 39px;
  flex: none;
  display: flex;
  align-items: center;
  padding: 0 12px;
  gap: 13px;
  background: linear-gradient(#2b2b2b, #1f1f1f);
  border-bottom: 2px solid #0c0c0c;
  font-size: 17px;
}
.group { display: flex; gap: 1px; border-radius: 3px; overflow: hidden; background: #1b1b1b; }
.group .btn { border-radius: 0; }
.group--tools { margin: 0 -6px 0 13px; }
.group--right { margin-left: auto; }
.btn {
  height: 25px;
  padding: 0 16px;
  display: flex;
  align-items: center;
  justify-content: center;
  border-radius: 3px;
  white-space: nowrap;
  background: linear-gradient(#424242, #3c3c3c 50%, #363636 50%, #363636);
}
.btn--menu { padding: 0 9px 0 13px; gap: 15px; }
.group--tools .btn--menu { padding: 0 9px 0 12px; gap: 12px; }
.btn--icon, .btn--up { width: 41px; padding: 0; }
.btn--up { background: #2b2b2b; }
.btn--on { background: linear-gradient(#4187ad, #3c83aa 50%, #2b79a4 50%, #2b79a4); }
.field { display: flex; align-items: center; gap: 6px; color: #c4c4c4; white-space: nowrap; }
.arrange .field { margin-left: 2px; }
.field--snap { flex: 1; }
.picker { flex: 1; display: grid; align-items: center; height: 25px; border-radius: 3px; background: linear-gradient(#424242, #3c3c3c 50%, #363636 50%, #363636); color: #e0e0e0; }
.picker > * { grid-area: 1 / 1; }
.picker svg { justify-self: end; margin-right: 6px; pointer-events: none; }
.picker select { appearance: none; width: 100%; padding: 0 24px 0 13px; outline: 0; }
.picker--drag { width: 133px; }
.picker--drag select { padding-left: 9px; }
.zooms { display: flex; align-items: center; gap: 10px; margin-left: 8px; margin-right: 6px; }
.zoom { display: grid; align-items: center; }
.zoom > * { grid-area: 1 / 1; }
.zoom input { appearance: none; width: 62px; height: 18px; }
.zoom input::-webkit-slider-thumb { appearance: none; width: 17px; height: 17px; border-radius: 50%; border: 2px solid #9a9a9a; background: #242424; }

.arrange { flex: 1; min-height: 0; margin: 0 2px 0 0; display: flex; flex-direction: column; border: 1px solid #060606; border-radius: 3px; overflow: hidden; background: #2a2a2a; }
.tracks { flex: 1; min-height: 0; display: grid; grid-template-columns: 401px 1fr; grid-template-rows: minmax(0, 1fr); }
.headers { background: #2a2a2a; border-right: 2px solid #0c0c0c; overflow: hidden; min-height: 0; }
.headers__top { height: 47px; display: flex; align-items: center; gap: 13px; padding: 0 11px 0 12px; border-bottom: 1px solid #060606; }
.btn--end { margin-left: auto; }
.track { height: 70px; display: flex; border-bottom: 1px solid #060606; }
.track--selected { background: linear-gradient(#666, #5e5e5e); }
.track__num { width: 28px; padding-top: 3px; display: flex; align-items: center; justify-content: center; background: #283a4e; border-right: 1px solid #060606; font-size: 16px; font-weight: 500; }
.track__mic { margin: 20px 19px 0 18px; }
.track__main { flex: 1; padding-top: 9px; }
.track__name { font-size: 16px; line-height: 22px; font-weight: 500; }
.track__row { display: flex; align-items: center; gap: 9px; margin-top: 5px; }
.track .half { width: 53px; }
.power { width: 26px; height: 22px; display: flex; align-items: center; justify-content: center; border-radius: 3px; background: linear-gradient(#4a93bd, #2b79a4); box-shadow: 0 0 0 1px rgba(0, 0, 0, .5); }
.pill { display: grid; align-items: center; width: 78px; height: 22px; margin-left: 5px; }
.pill > * { grid-area: 1 / 1; }
.pill svg { background: #000; border-radius: 9px; }
.pill input { height: 22px; }
.pill input::-webkit-slider-thumb { width: 24px; height: 24px; border-color: rgba(130, 130, 130, .4); background: linear-gradient(rgba(150, 150, 150, .9), rgba(70, 70, 70, .6) 20%, rgba(60, 60, 60, .6) 70%, rgba(100, 100, 100, .7)); }
.track__pan { margin: 12px 11px 0 0; }

.timeline { display: flex; flex-direction: column; min-width: 0; min-height: 0; }
.ruler { height: 47px; flex: none; display: flex; background: #383838; border-bottom: 1px solid #060606; }
.measure { flex: 4 0 0; min-width: 0; display: grid; grid-template-columns: repeat(4, 1fr); align-items: end; }
.measure--part { flex: 3 0 0; grid-template-columns: repeat(3, 1fr); }
.measure i { height: 11px; border-left: 1px solid #666; }
.measure i.bar-line { height: 19px; }
.measure i.bar-line--num { height: 43px; padding-left: 4px; font: 500 16px/12px Inter, "Liberation Sans", sans-serif; border-color: #777; }
.lanes { flex: 1; min-height: 0; display: grid; grid-template: minmax(0, 1fr) / 1fr; overflow: hidden; }
.lanes > * { grid-area: 1 / 1; }
.lanes__rows i { display: block; height: 70px; background: #2e2e2e; border-bottom: 1px solid #242424; }
.lanes__rows .is-selected { background: #353535; }
.lanes__grid { display: flex; }
.lanes__grid span { flex: 4 0 0; border-left: 1px solid #444; }
.lanes__grid .part { flex-grow: 3; border: 0; }

/* Mixer */
.mixer { flex: none; border: 3px solid #fbbf2d; border-radius: 4px; overflow: hidden; background: #2a2a2a; }
.mixer .bar { height: 35px; padding: 0 11px 0 10px; }
.strips {
  display: grid;
  grid-template-columns: 119fr repeat(9, 88fr) 84fr repeat(4, 88fr) 233fr;
}
.legend, .strip {
  display: grid;
  grid-template-rows: 31px 30px 37px 45px 55px 51px 188px 26px 30px 28px;
  align-items: start;
  justify-items: end;
  padding-top: 9px;
  min-width: 0;
}
.legend { border-right: 1px solid #0c0c0c; color: #b4b4b4; line-height: 22px; font-weight: 500; }
.legend span { margin-right: 9px; }
.legend .legend__pan { margin-top: 11px; }
.strip { grid-template-columns: 76px; justify-content: center; justify-items: center; border-right: 1px solid #0c0c0c; overflow: hidden; }
.strip--selected { background: #636363; }
.strip .name { margin: 0 -7px; line-height: 28px; box-shadow: 0 -1px #060606; }
.strip__icon { margin-top: -1px; }
.strip__icon--din { margin-top: -4px; }
.strip__icon--piano { margin-top: -8px; }
.strip__knob { margin-top: -24px; }
.dot { width: 12px; height: 12px; border-radius: 50%; background: #f39021; }
.midi { display: flex; align-items: center; gap: 9px; margin-left: 2px; }
.midi .lcdbox { width: 44px; }
```
FILE: mixer.js
```js
const point = (cx, r, deg) => {
  const a = deg * Math.PI / 180;
  return (cx + r * Math.sin(a)).toFixed(2) + " " + (cx - r * Math.cos(a)).toFixed(2);
};
const arc = (cx, r, a, b) =>
  `M${point(cx, r, a)}A${r} ${r} 0 ${b - a > 180 ? 1 : 0} 1 ${point(cx, r, b)}`;

// Pan knob: open ring with either a centre tick or a value arc.
function panKnob(angle, text, fill) {
  let mark = `<path d="M23 1v5M23 7v5" stroke="#3fbf76" stroke-width="2"/>`;
  if (text) {
    mark = `<path d="${angle < 0 ? arc(23, 20, angle, 0) : arc(23, 20, 0, angle)}" fill="none" stroke="#45d17d" stroke-width="5"/>
      <path d="M${point(23, 12, angle)}L${point(23, 22, angle)}" stroke="#45d17d" stroke-width="2"/>
      <text x="23" y="29" text-anchor="middle" font-size="14" fill="#e8e8e8">${text}</text>`;
  } else if (angle) {
    mark = `<path d="M${point(23, 13, angle)}L${point(23, 20, angle)}" stroke="#3fbf76" stroke-width="2"/>`;
  }
  return `<svg width="46" height="46"><path d="${arc(23, 20, -155, 155)}" fill="${fill || "none"}" stroke="rgba(255,255,255,.2)" stroke-width="5"/>${mark}</svg>`;
}

const LONG = [0, 22, 45, 67, 91, 105, 124, 138, 154, 162, 177];
const SHORT = [6, 14, 30, 37, 52, 60, 75, 83, 94, 97, 100, 109, 112, 116, 120, 127, 131, 134, 141, 144, 147, 150, 158, 166, 170];
const METER = [[0, 0], [3, 12], [6, 24], [9, 36], [12, 47], [15, 59], [18, 71], [21, 83], [24, 95], [30, 111], [35, 124], [40, 137], [45, 150], [50, 164], [60, 177]];

const ticks = (list, x1, x2) => list.map(y => `M${x1} ${y + 2}H${x2}`).join("");

function fader(s) {
  const midi = s.kind === "midi";
  const long = midi ? [0, 44, 88, 133, 177] : LONG;
  const short = midi ? [11, 22, 33, 55, 66, 77, 99, 110, 121, 144, 155, 166] : SHORT;
  let out = `<path d="${ticks(long, 0, 15)}${ticks(short, 10, 15)}" stroke="#9c9c9c" stroke-width="1.5"/>
    <path d="M18 0v181" stroke="#051005" stroke-width="3"/>`;
  if (s.meters) {
    out += METER.map(m => `<text class="digits" x="49" y="${m[1] + 5}">${m[0]}</text>`).join("");
    out += `<path d="${ticks(METER.map(m => m[1]), 50, 54)}" stroke="#9c9c9c"/><path d="M53 2v177" stroke="#9c9c9c" stroke-width="2" stroke-dasharray="1 3"/>`;
    s.meters.forEach((m, i) => {
      const x = 55 + i * 7;
      out += `<path d="M${x} 0h5v180h-5z" fill="url(#meter-dim)"/><path d="M${x} ${m[0] + 2}h5V180h-5z" fill="url(#meter-lit)"/>`;
      if (m[1]) out += `<path d="M${x} ${m[1] + 1}h5v2h-5z" fill="url(#meter-lit)"/>`;
    });
  }
  const value = Math.round((156 - (s.level + 2)) / 131 * 1000) / 10;
  return `<div class="fader${s.meters ? "" : " fader--solo"}"><svg width="${s.meters ? 68 : 36}" height="181">${out}</svg>
    <input type="range" aria-label="${s.name} volume" min="0" max="100" step="any" value="${value}"></div>`;
}

const AUTO = { Read: "read", Touch: "touch", Latch: "latch" };

function lowerStrip(s) {
  const db = s.kind === "midi"
    ? `<div class="midi"><output class="lcdbox">90</output><span class="dot"></span></div>`
    : `<div class="duo duo--db"${s.db.length === 1 ? ' style="grid-template-columns:1fr"' : ""}>${s.db.map(v => `<output class="lcdbox">${v}</output>`).join("")}</div>`;
  const rec = s.bounce
    ? `<div class="duo"><button class="key key--bounce">${s.bounce}</button></div>`
    : s.rec ? `<div class="duo"><div class="half"><button class="key" aria-label="Record"><svg width="12" height="12"><use href="#i-dot"/></svg></button><button class="key">I</button></div></div>` : `<div></div>`;
  const keys = s.kind === "midi"
    ? `<button class="key key--alone">M</button>`
    : `<div class="duo"><button class="key">M</button><button class="key">${s.kind === "master" ? "D" : "S"}</button></div>`;
  return { db, rec, keys };
}

const group = s => `<output class="lcdbox lcdbox--group">${s.group || ""}</output>`;
const auto = s => `<button class="plate plate--${s.off ? "off" : AUTO[s.mode || "Read"]}">${s.mode || "Read"}</button>`;
const ICON_SIZE = { mic: [27, 27], aux: [27, 27], din: [34, 34], piano: [36, 40] };

function mixerStrip(s) {
  const p = lowerStrip(s);
  const icon = s.icon || "mic";
  const [w, h] = ICON_SIZE[icon];
  const top = s.kind === "midi" ? `<div class="strip__knob">${panKnob(-152)}</div>`
    : s.noOut ? `<div></div>` : `<button class="plate">St Out</button>`;
  return `<section class="strip${s.selected ? " strip--selected" : ""}">${top}${group(s)}${auto(s)}
    <svg class="strip__icon strip__icon--${icon}" width="${w}" height="${h}"><use href="#i-${icon}"/></svg>
    ${s.noPan ? "<div></div>" : panKnob(s.pan || 0, s.panText, s.selected ? "#2a2a2a" : "")}
    ${p.db}${fader(s)}${p.rec}${p.keys}<div class="name name--${s.tint || "audio"}">${s.name}</div></section>`;
}

const usual = [[37], [39, 34]];
const strips = [
  { name: "Audio 1", group: 1, db: ["-3,4", "-8,0"], level: 71, meters: [[33], [103, 100]], rec: 1, pan: -95, panText: "-42" },
  { name: "Audio 2", off: 1, db: ["-4,6", "-8,8"], level: 79, meters: usual, rec: 1 },
  { name: "Audio 3", group: 2, db: ["-4,6", "-8,8"], level: 79, meters: usual, rec: 1, selected: 1 },
  { name: "Audio 4", off: 1, db: ["-4,6", "-8,8"], level: 79, meters: [[117], [39, 34]], rec: 1, pan: 110, panText: "+46" },
  { name: "Audio 5", group: 2, db: ["-4,6", "-8,8"], level: 79, meters: usual, rec: 1 },
  { name: "Audio 6", mode: "Touch", db: ["-4,6", "-9,2"], level: 79, meters: [[37]], rec: 1 },
  { name: "Audio 7", group: 1, db: ["-4,6", "-8,8"], level: 79, meters: usual, rec: 1 },
  { name: "Audio 8", mode: "Latch", db: ["-4,6", "-9,2"], level: 79, meters: [[37]], rec: 1 },
  { name: "303", off: 1, db: ["0,0", "-14,5"], level: 45, meters: [[77, 58], [77, 58]], icon: "din", tint: "inst" },
  { name: "Gran...iano", off: 1, kind: "midi", level: 45, icon: "piano", tint: "inst" },
  { name: "Aux 1", off: 1, db: ["-2,7", "-2,3"], level: 66, meters: [[12], [14, 10]], icon: "aux", tint: "aux" },
  { name: "Aux 2", off: 1, db: ["0,0", "-5,9"], level: 45, meters: [[45, 29], [41, 26]], icon: "aux", tint: "aux" },
  { name: "Master", off: 1, db: ["0,0"], level: 45, kind: "master", tint: "master", noOut: 1, noPan: 1 },
  { name: "Stereo Out", off: 1, db: ["0,0", "-0,0"], level: 45, meters: [[-1], [3]], tint: "out", noOut: 1, bounce: "Bnc" }
];
document.getElementById("strips").insertAdjacentHTML("beforeend", strips.map(mixerStrip).join(""));

// Inspector channels reuse the lower half of a strip.
[["channel-track", { name: "Audio 3", group: 2, db: ["-4,6", "-8,8"], level: 79, meters: usual, rec: 1 }],
 ["channel-out", { name: "Stereo Out", off: 1, db: ["0,0", "-0,0"], level: 45, meters: [[-1], [3]], tint: "out", bounce: "Bnce" }]
].forEach(([id, s]) => {
  const p = lowerStrip(s);
  document.getElementById(id).insertAdjacentHTML("beforeend",
    `${group(s)}${auto(s)}${panKnob(0)}${p.db}${fader(s)}${p.rec}${p.keys}<div class="name name--${s.tint || "audio"}">${s.name}</div>`);
});

document.querySelectorAll(".mini-knob").forEach(k => {
  const a = +k.dataset.from, b = +k.dataset.to;
  k.innerHTML = `<path d="${arc(11, 8.5, -155, 155)}" fill="none" stroke="#000" stroke-width="4"/><path d="${arc(11, 8.5, a, b)}" fill="none" stroke="${k.dataset.color}" stroke-width="4"/>`;
});

document.getElementById("legend-scale").innerHTML =
  `<path d="${ticks(LONG, 45, 60)}${ticks(SHORT, 54, 60)}" stroke="#9c9c9c" stroke-width="1.5"/>` +
  ["6", "3", "0", "3", "6", "10", "15", "20", "30", "40", "∞"].map((t, i) => `<text class="digits" x="41" y="${LONG[i] + 5}">${t}</text>`).join("");

// Track headers
const headers = [
  { n: 1, a: -93, l: 50, r: 28, v: 60 },
  { n: 2, a: 0, l: 49, r: 49, v: 53, peak: 1 },
  { n: 3, a: 0, l: 49, r: 49, v: 53, peak: 1 },
  { n: 4, a: 110, l: 21, r: 49, v: 53, peak: 1 },
  { n: 5, a: 0, l: 49, r: 49, v: 53, peak: 1 }
];
const lit = (w, y) => `<path d="M7 ${y}h${Math.min(w, 38)}v5H7z" fill="#329c27"/>` + (w > 38 ? `<path d="M45 ${y}h${w - 38}v5h-${w - 38}z" fill="#66fb44"/>` : "");
document.getElementById("track-list").innerHTML = headers.map(t => `
  <div class="track${t.n === 3 ? " track--selected" : ""}">
    <div class="track__num">${t.n}</div>
    <svg class="track__mic" width="27" height="27"><use href="#i-mic"/></svg>
    <div class="track__main"><div class="track__name">Audio ${t.n}</div>
      <div class="track__row">
        <button class="power" aria-label="On/Off"><svg width="18" height="18"><use href="#i-power"/></svg></button>
        <div class="half"><button class="key">M</button><button class="key">S</button></div>
        <div class="half"><button class="key" aria-label="Freeze"><svg width="17" height="17"><use href="#i-freeze"/></svg></button><button class="key" aria-label="Record"><svg width="12" height="12"><use href="#i-dot"/></svg></button></div>
        <div class="pill"><svg width="78" height="18">${lit(t.l, 3)}${lit(t.r, 10)}${t.peak ? '<path d="M57 10h2v5h-2z" fill="#66fb44"/>' : ""}</svg><input type="range" aria-label="Audio ${t.n} volume" value="${t.v}"></div>
      </div>
    </div>
    <svg class="track__pan" width="40" height="44"><circle cx="20" cy="20" r="17" fill="#1c1c1c"/><path d="${arc(20, 18, -145, 145)}" fill="none" stroke="#444"/>
      <circle cx="20" cy="20" r="12.5" fill="url(#knob-face)" stroke="#b0b0b0" stroke-width="3"/>
      <path d="M${point(20, 4, t.a)}L${point(20, 12, t.a)}" stroke="#ddd" stroke-width="2"/><circle cx="${point(20, 14.5, t.a).split(" ")[0]}" cy="${point(20, 14.5, t.a).split(" ")[1]}" r="2.6" fill="#3cc492"/></svg>
  </div>`).join("");

// Ruler and lane grid: bars 6 to 24, with a part bar at either end
let ruler = `<div class="measure measure--part"><i></i><i></i><i></i></div>`, grid = `<span class="part"></span>`;
for (let n = 6; n < 24; n++) {
  ruler += `<div class="measure">${n % 2 ? `<i class="bar-line bar-line--num">${n}</i>` : `<i class="bar-line"></i>`}<i></i><i></i><i></i></div>`;
  grid += "<span></span>";
}
document.getElementById("ruler").innerHTML = ruler;
document.getElementById("grid").innerHTML = grid;
```
